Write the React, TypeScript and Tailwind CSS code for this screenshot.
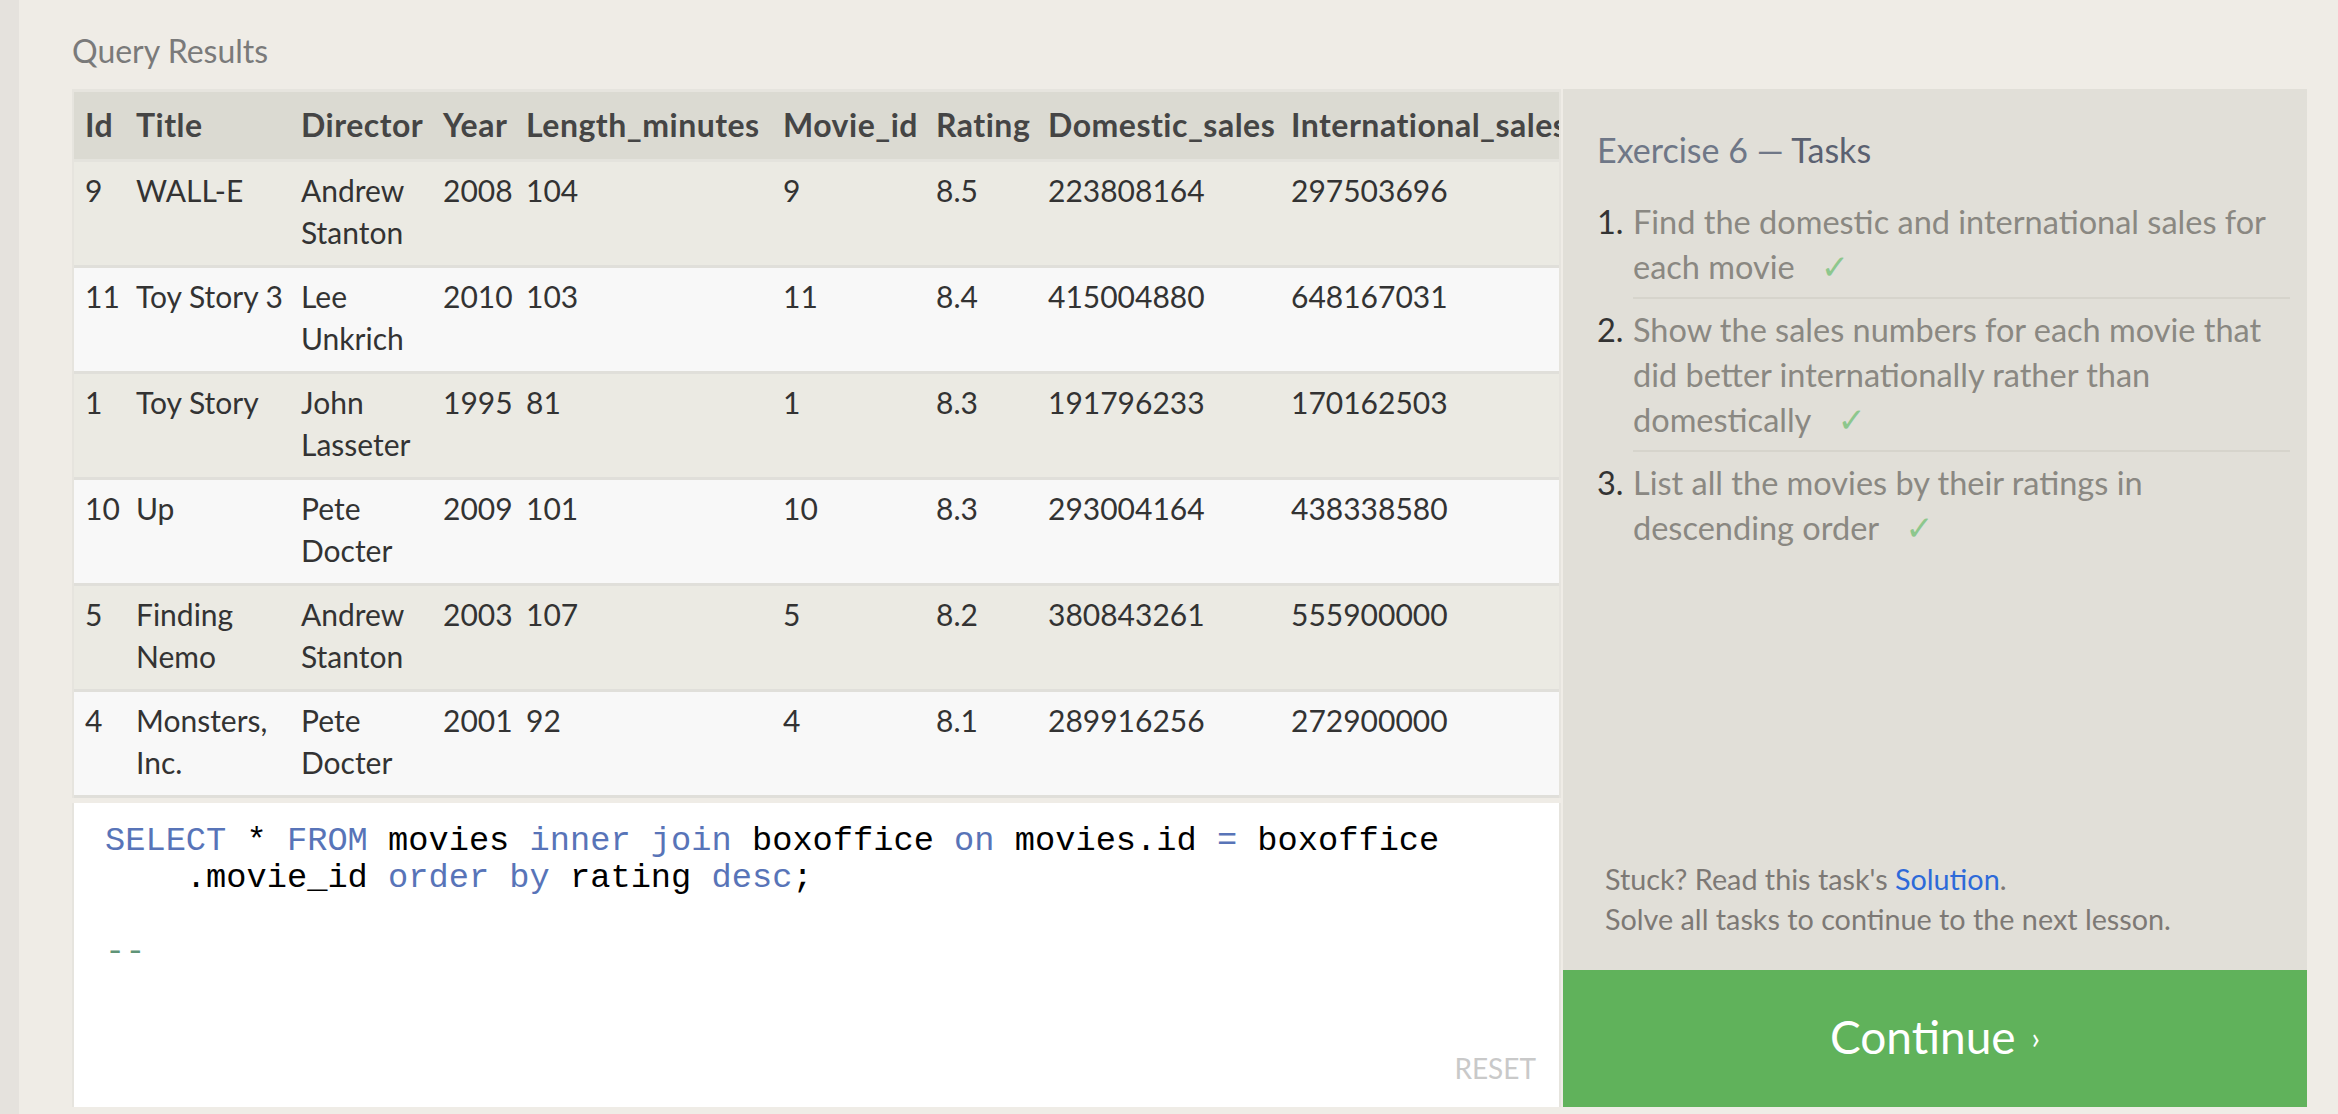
import React from 'react'

type Movie = {
  id: string
  title: string
  director: string
  year: string
  length: string
  movieId: string
  rating: string
  domestic: string
  international: string
}

const movies: Movie[] = [
  { id: '9', title: 'WALL-E', director: 'Andrew\nStanton', year: '2008', length: '104', movieId: '9', rating: '8.5', domestic: '223808164', international: '297503696' },
  { id: '11', title: 'Toy Story 3', director: 'Lee\nUnkrich', year: '2010', length: '103', movieId: '11', rating: '8.4', domestic: '415004880', international: '648167031' },
  { id: '1', title: 'Toy Story', director: 'John\nLasseter', year: '1995', length: '81', movieId: '1', rating: '8.3', domestic: '191796233', international: '170162503' },
  { id: '10', title: 'Up', director: 'Pete\nDocter', year: '2009', length: '101', movieId: '10', rating: '8.3', domestic: '293004164', international: '438338580' },
  { id: '5', title: 'Finding\nNemo', director: 'Andrew\nStanton', year: '2003', length: '107', movieId: '5', rating: '8.2', domestic: '380843261', international: '555900000' },
  { id: '4', title: 'Monsters,\nInc.', director: 'Pete\nDocter', year: '2001', length: '92', movieId: '4', rating: '8.1', domestic: '289916256', international: '272900000' },
]

const headers = ['Id', 'Title', 'Director', 'Year', 'Length_minutes', 'Movie_id', 'Rating', 'Domestic_sales', 'International_sales']
const widths = ['w-[51px]', 'w-[165px]', 'w-[142px]', 'w-[83px]', 'w-[257px]', 'w-[153px]', 'w-[112px]', 'w-[243px]', 'w-[320px]']

const tasks = [
  ['Find the domestic and international sales for', 'each movie'],
  ['Show the sales numbers for each movie that', 'did better internationally rather than', 'domestically'],
  ['List all the movies by their ratings in', 'descending order'],
]

function Kw({ children }: { children: React.ReactNode }) {
  return <span className="text-[#5874b8]">{children}</span>
}

export default function App() {
  return (
    <div className="flex min-h-screen bg-[#efece6] font-['Lato','Open_Sans',sans-serif]">
      <div className="w-[19px] shrink-0 bg-[#e5e2dd]" />
      <div className="pl-[53px] pr-[31px]">
        <div className="h-[89px] pt-[31px] text-[32px] leading-[40px] text-[#7a7a7a]">Query Results</div>

        <div className="flex gap-[2px]">
          <div className="flex w-[1489px] flex-col">
            {/* results table; the last column runs past the edge and is cut off */}
            <div className="overflow-hidden border-x-2 border-t-[3px] border-[#e6e4de] bg-[#e6e4de]">
              <table className="w-[1526px] table-fixed border-collapse text-left text-[30px] leading-[42px]">
                <colgroup>
                  {widths.map((w, i) => (
                    <col key={i} className={w} />
                  ))}
                </colgroup>
                <thead>
                  <tr className="border-b-[3px] border-[#e4e3dd] bg-[#dbdad2] text-[#454545]">
                    {headers.map(h => (
                      <th key={h} className="whitespace-nowrap pb-[13px] pl-[11px] pt-[12px] text-[32px] font-bold tracking-[0.5px]">
                        {h}
                      </th>
                    ))}
                  </tr>
                </thead>
                <tbody className="text-[#333]">
                  {movies.map((m, r) => (
                    <tr key={m.id} className={`border-b-[3px] border-[#e0dfda] ${r % 2 === 0 ? 'bg-[#ebeae3]' : 'bg-[#f8f8f8]'}`}>
                      {[m.id, m.title, m.director, m.year, m.length, m.movieId, m.rating, m.domestic, m.international].map((v, i) => (
                        <td key={i} className="whitespace-pre-line pb-[12px] pl-[11px] pt-[7px] align-top">
                          {v}
                        </td>
                      ))}
                    </tr>
                  ))}
                </tbody>
              </table>
            </div>

            <div className="mt-[5px] flex h-[304px] flex-col justify-between border-x-2 border-[#e6e4de] bg-white pl-[31px] pr-[23px]">
              <pre className="pt-[20px] font-['Liberation_Mono','Courier_New',monospace] text-[33.7px] leading-[37px] text-black">
                <Kw>SELECT</Kw> * <Kw>FROM</Kw> movies <Kw>inner join</Kw> boxoffice <Kw>on</Kw> movies.id <Kw>=</Kw> boxoffice{'\n'}
                {'    '}.movie_id <Kw>order by</Kw> rating <Kw>desc</Kw>;{'\n'}
                {'\n'}
                <span className="text-[#5f9477]">--</span>
              </pre>
              <div className="self-end pb-[19px] text-[28px] leading-[40px] text-[#c9c9c9]">RESET</div>
            </div>
          </div>

          <div className="flex w-[744px] flex-col">
            <div className="flex flex-1 flex-col justify-between bg-[#e1dfd8]">
              <div className="pl-[34px] pr-[17px] pt-[41px]">
                <h2 className="text-[34px] leading-[40px] text-[#6f7787]">
                  Exercise 6 — <span className="text-[#5b6171]">Tasks</span>
                </h2>
                <ol className="mt-[21px] text-[32.5px] leading-[45px]">
                  {tasks.map((lines, i) => (
                    <li key={i} className="flex">
                      <span className="w-[36px] shrink-0 pt-[8px] text-[#333]">{i + 1}.</span>
                      <div className={`flex-1 whitespace-nowrap pb-[7px] pt-[8px] text-[#8a8882] ${i < tasks.length - 1 ? 'border-b-2 border-[#d6d4cc]' : ''}`}>
                        {lines.map((l, j) => (
                          <div key={j}>
                            {l}
                            {j === lines.length - 1 && (
                              <span className="ml-[26px] font-['DejaVu_Sans',sans-serif] text-[34px] text-[#8dc78d]">✓</span>
                            )}
                          </div>
                        ))}
                      </div>
                    </li>
                  ))}
                </ol>
              </div>
              <div className="pb-[31px] pl-[42px] text-[28.75px] leading-[40px] text-[#7d7975]">
                <p>
                  Stuck? Read this task's <a className="text-[#2d6ad9]">Solution</a>.
                </p>
                <p>Solve all tasks to continue to the next lesson.</p>
              </div>
            </div>
            <button className="flex h-[137px] items-center justify-center gap-[16px] bg-[#60b25b] pb-[3px] text-white">
              <span className="text-[46px] leading-none">Continue</span>
              <span className="text-[30px] leading-none">›</span>
            </button>
          </div>
        </div>
      </div>
    </div>
  )
}
